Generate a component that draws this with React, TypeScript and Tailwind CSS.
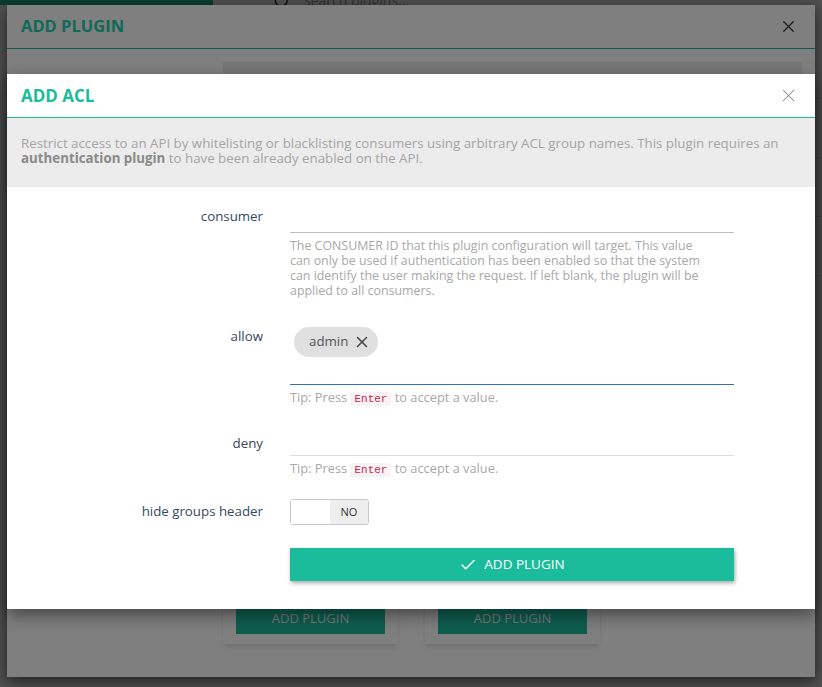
import React from "react";
import { X, Check, Search } from "lucide-react";

const font = { fontFamily: '"Open Sans", "Liberation Sans", sans-serif' };

const consumerHelp = [
  "The CONSUMER ID that this plugin configuration will target. This value",
  "can only be used if authentication has been enabled so that the system",
  "can identify the user making the request. If left blank, the plugin will be",
  "applied to all consumers.",
];

const Page = () => {
  return (
    <div className="flex flex-col h-full bg-[#f7f7f7]">
      <div className="flex items-start h-[40px]">
        <div className="w-[213px] h-[5px] bg-[#1abc9c]" />
        <div className="flex items-center gap-3 ml-[60px] -mt-[10px]">
          <Search size={18} className="text-[#333]" />
          <span className="text-[14px] text-[#999]">Search plugins...</span>
        </div>
      </div>
      <div className="flex flex-col items-end pr-0">
        {["9", "8", "4", "2"].map((d) => (
          <div
            key={d}
            className="w-[20px] h-[59px] flex items-center border-b border-[#ddd] text-[16px] text-[#333]"
          >
            {d}
          </div>
        ))}
      </div>
    </div>
  );
};

const OuterModal = () => {
  return (
    <div className="absolute left-[7px] top-[5px] w-[808px] h-[672px] bg-white shadow-[0_4px_14px_rgba(0,0,0,0.6)] flex flex-col">
      <div className="h-[44px] flex items-center justify-between pl-[14px] pr-[17px] border-b border-[#1abc9c]">
        <h2 className="text-[16.5px] font-bold text-[#20d4ae]">ADD PLUGIN</h2>
        <X size={19} strokeWidth={1.5} className="text-[#333]" />
      </div>
      <div className="flex-1 flex flex-col pl-[216px] pr-[13px] pt-[13px]">
        <div className="h-[200px] bg-[#eeeeee]" />
        <div className="flex-1" />
        <div className="flex gap-[27px] pb-[33px]">
          {[0, 1].map((i) => (
            <div
              key={i}
              className="w-[175px] px-[13px] pt-[13px] pb-[10px] bg-white shadow-md flex flex-col"
            >
              <div className="h-[30px] bg-[#1abc9c] flex items-center justify-center text-[13px] text-[#f0f0f0]">
                ADD PLUGIN
              </div>
            </div>
          ))}
        </div>
      </div>
    </div>
  );
};

const Tip = () => (
  <p className="mt-[5px] text-[12.8px] leading-[15px] text-[#a8a8a8]">
    Tip: Press{" "}
    <code className="px-[4px] py-[1px] rounded-[3px] bg-[#f9f2f4] text-[#c7254e] text-[11px] font-['Liberation_Mono',monospace]">
      Enter
    </code>{" "}
    to accept a value.
  </p>
);

const AclModal = () => {
  return (
    <div className="absolute left-[7px] top-[74px] w-[808px] bg-white shadow-[0_6px_16px_rgba(0,0,0,0.45)]">
      <div className="h-[44px] flex items-center justify-between pl-[14px] pr-[16px] border-b border-[#1abc9c]">
        <h3 className="text-[17px] font-bold text-[#1abc9c]">ADD ACL</h3>
        <X size={21} strokeWidth={1.15} className="text-[#888]" />
      </div>
      <div className="bg-[#ececec] pl-[14px] pr-[14px] pt-[18px] pb-[21px] text-[13.3px] leading-[15px] text-[#a5a5a5]">
        Restrict access to an API by whitelisting or blacklisting consumers using arbitrary ACL group names. This plugin
        requires an <b className="text-[#8a8a8a]">authentication plugin</b> to have been already enabled on the API.
      </div>

      <div className="flex flex-col pt-[16px] pb-[28px] text-[13.3px]">
        {/* consumer */}
        <div className="flex">
          <label className="w-[256px] pt-[6px] text-right leading-[15px] text-[#34495e]">consumer</label>
          <div className="ml-[27px] w-[444px]">
            <div className="h-[30px] border-b border-[#bdbdbd]" />
            <div className="mt-[5px] flex flex-col text-[12.4px] leading-[15px] text-[#a8a8a8]">
              {consumerHelp.map((line) => (
                <span key={line} className="whitespace-nowrap">
                  {line}
                </span>
              ))}
            </div>
          </div>
        </div>

        {/* allow */}
        <div className="flex mt-[23px]">
          <label className="w-[256px] pt-[8px] text-right leading-[15px] text-[#34495e]">allow</label>
          <div className="ml-[27px] w-[444px]">
            <div className="pt-[6px] pl-[4px] flex">
              <span className="h-[30px] pl-[15px] pr-[7px] rounded-full bg-[#e0e0e0] flex items-center gap-[5px] text-[13.3px] text-[#555]">
                admin
                <X size={18} strokeWidth={2} className="text-[#444]" />
              </span>
            </div>
            <div className="h-[28px] border-b border-[#2f6fbf]" />
            <Tip />
          </div>
        </div>

        {/* deny */}
        <div className="flex mt-[19px]">
          <label className="w-[256px] pt-[10px] text-right leading-[15px] text-[#34495e]">deny</label>
          <div className="ml-[27px] w-[444px]">
            <div className="h-[30px] border-b border-[#dedede]" />
            <Tip />
          </div>
        </div>

        {/* hide groups header */}
        <div className="flex items-center mt-[21px]">
          <label className="w-[256px] text-right text-[#34495e]">hide groups header</label>
          <div className="ml-[27px] w-[79px] h-[26px] flex border border-[#c8c8c8] rounded-[3px] overflow-hidden">
            <div className="flex-1 bg-white" />
            <div className="w-[38px] bg-[#eeeeee] flex items-center justify-center text-[11px] text-[#333]">NO</div>
          </div>
        </div>

        <div className="flex mt-[23px]">
          <div className="w-[256px]" />
          <button className="ml-[27px] w-[444px] h-[33px] bg-[#1abc9c] text-white text-[13.5px] flex items-center justify-center gap-[7px] shadow-[1px_2px_4px_rgba(0,0,0,0.35)]">
            <Check size={18} strokeWidth={2} />
            ADD PLUGIN
          </button>
        </div>
      </div>
    </div>
  );
};

export default function App() {
  return (
    <div className="relative w-[822px] h-[687px] overflow-hidden" style={font}>
      <Page />
      <div className="absolute inset-0 bg-black/[0.35]" />
      <OuterModal />
      <div className="absolute inset-0 bg-black/50" />
      <AclModal />
    </div>
  );
}
